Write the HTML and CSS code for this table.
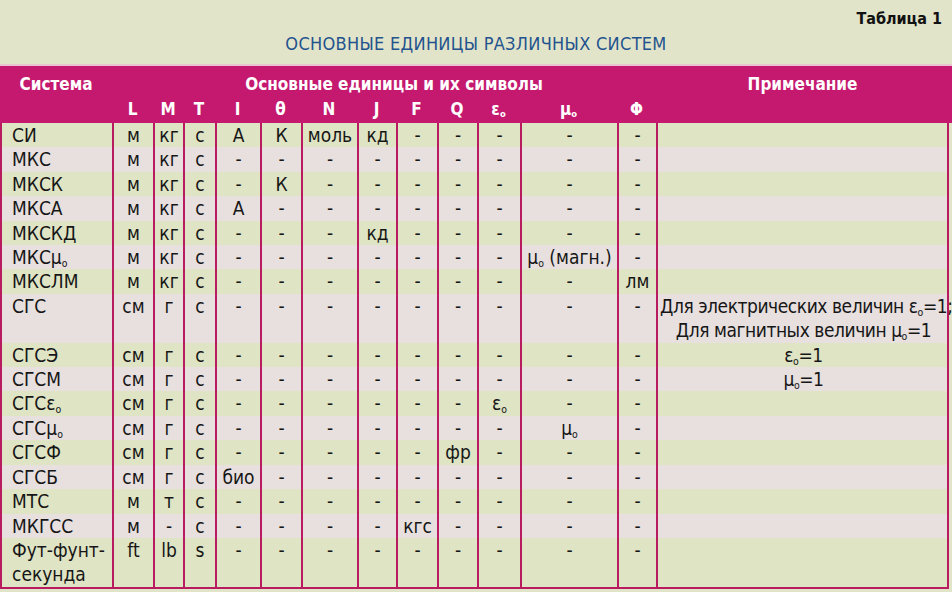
FILE: index.html
```html
<!DOCTYPE html>
<html lang="ru">
<head>
<meta charset="utf-8">
<title>Таблица 1</title>
<link rel="stylesheet" href="styles.css">
</head>
<body>
<div class="page">
  <div class="top">
    <div class="tabno">Таблица 1</div>
    <div class="title">ОСНОВНЫЕ ЕДИНИЦЫ РАЗЛИЧНЫХ СИСТЕМ</div>
  </div>
  <div class="table">
    <div class="head">
      <div class="hrow hrow1">
        <div class="h-sys">Система</div>
        <div class="h-units">Основные единицы и их символы</div>
        <div class="h-note">Примечание</div>
      </div>
      <div class="hrow hrow2">
        <div></div>
        <div>L</div><div>M</div><div>T</div><div>I</div><div>θ</div><div>N</div><div>J</div><div>F</div><div>Q</div>
        <div>ε<sub class="o">o</sub></div><div>μ<sub class="o">o</sub></div><div>Φ</div>
        <div></div>
      </div>
    </div>

    <div class="row g"><div class="name">СИ</div><div>м</div><div>кг</div><div>с</div><div>А</div><div>К</div><div>моль</div><div>кд</div><div>-</div><div>-</div><div>-</div><div>-</div><div>-</div><div class="note"></div></div>
    <div class="row p"><div class="name">МКС</div><div>м</div><div>кг</div><div>с</div><div>-</div><div>-</div><div>-</div><div>-</div><div>-</div><div>-</div><div>-</div><div>-</div><div>-</div><div class="note"></div></div>
    <div class="row g"><div class="name">МКСК</div><div>м</div><div>кг</div><div>с</div><div>-</div><div>К</div><div>-</div><div>-</div><div>-</div><div>-</div><div>-</div><div>-</div><div>-</div><div class="note"></div></div>
    <div class="row p"><div class="name">МКСА</div><div>м</div><div>кг</div><div>с</div><div>А</div><div>-</div><div>-</div><div>-</div><div>-</div><div>-</div><div>-</div><div>-</div><div>-</div><div class="note"></div></div>
    <div class="row g"><div class="name">МКСКД</div><div>м</div><div>кг</div><div>с</div><div>-</div><div>-</div><div>-</div><div>кд</div><div>-</div><div>-</div><div>-</div><div>-</div><div>-</div><div class="note"></div></div>
    <div class="row p"><div class="name">МКСμ<sub class="o">o</sub></div><div>м</div><div>кг</div><div>с</div><div>-</div><div>-</div><div>-</div><div>-</div><div>-</div><div>-</div><div>-</div><div>μ<sub class="o">o</sub> (магн.)</div><div>-</div><div class="note"></div></div>
    <div class="row g"><div class="name">МКСЛМ</div><div>м</div><div>кг</div><div>с</div><div>-</div><div>-</div><div>-</div><div>-</div><div>-</div><div>-</div><div>-</div><div>-</div><div>лм</div><div class="note"></div></div>
    <div class="row p"><div class="name">СГС</div><div>см</div><div>г</div><div>с</div><div>-</div><div>-</div><div>-</div><div>-</div><div>-</div><div>-</div><div>-</div><div>-</div><div>-</div><div class="note">Для электрических величин ε<sub class="o">o</sub>=1;<br>Для магнитных величин μ<sub class="o">o</sub>=1</div></div>
    <div class="row g"><div class="name">СГСЭ</div><div>см</div><div>г</div><div>с</div><div>-</div><div>-</div><div>-</div><div>-</div><div>-</div><div>-</div><div>-</div><div>-</div><div>-</div><div class="note">ε<sub class="o">o</sub>=1</div></div>
    <div class="row p"><div class="name">СГСМ</div><div>см</div><div>г</div><div>с</div><div>-</div><div>-</div><div>-</div><div>-</div><div>-</div><div>-</div><div>-</div><div>-</div><div>-</div><div class="note">μ<sub class="o">o</sub>=1</div></div>
    <div class="row g"><div class="name">СГСε<sub class="o">o</sub></div><div>см</div><div>г</div><div>с</div><div>-</div><div>-</div><div>-</div><div>-</div><div>-</div><div>-</div><div>ε<sub class="o">o</sub></div><div>-</div><div>-</div><div class="note"></div></div>
    <div class="row p"><div class="name">СГСμ<sub class="o">o</sub></div><div>см</div><div>г</div><div>с</div><div>-</div><div>-</div><div>-</div><div>-</div><div>-</div><div>-</div><div>-</div><div>μ<sub class="o">o</sub></div><div>-</div><div class="note"></div></div>
    <div class="row g"><div class="name">СГСФ</div><div>см</div><div>г</div><div>с</div><div>-</div><div>-</div><div>-</div><div>-</div><div>-</div><div>фр</div><div>-</div><div>-</div><div>-</div><div class="note"></div></div>
    <div class="row p"><div class="name">СГСБ</div><div>см</div><div>г</div><div>с</div><div>био</div><div>-</div><div>-</div><div>-</div><div>-</div><div>-</div><div>-</div><div>-</div><div>-</div><div class="note"></div></div>
    <div class="row g"><div class="name">МТС</div><div>м</div><div>т</div><div>с</div><div>-</div><div>-</div><div>-</div><div>-</div><div>-</div><div>-</div><div>-</div><div>-</div><div>-</div><div class="note"></div></div>
    <div class="row p"><div class="name">МКГСС</div><div>м</div><div>-</div><div>с</div><div>-</div><div>-</div><div>-</div><div>-</div><div>кгс</div><div>-</div><div>-</div><div>-</div><div>-</div><div class="note"></div></div>
    <div class="row g last"><div class="name">Фут-фунт-<br>секунда</div><div>ft</div><div>lb</div><div>s</div><div>-</div><div>-</div><div>-</div><div>-</div><div>-</div><div>-</div><div>-</div><div>-</div><div>-</div><div class="note"></div></div>
  </div>
</div>
</body>
</html>
```

FILE: styles.css
```css
* { box-sizing: border-box; }
html, body { margin: 0; padding: 0; }
body {
  background: #e2e4c9;
  font-family: "Liberation Sans Narrow", "DejaVu Sans Condensed", "Liberation Sans", sans-serif;
  color: #161616;
  width: 952px;
  height: 592px;
  overflow: hidden;
}
.page { width: 952px; }
.top {
  height: 66px;
  border-bottom: 2px solid #e9c6d2;
}
.tabno {
  text-align: right;
  padding: 9px 10px 0 0;
  font-weight: bold;
  font-size: 16px;
  line-height: 20px;
  color: #111;
}
.title {
  text-align: center;
  color: #23538e;
  font-size: 18px;
  letter-spacing: 0.3px;
  line-height: 20px;
  margin-top: 5px;
}
.hrow, .row {
  display: grid;
  grid-template-columns: 112px 41px 30px 32px 45px 41px 56px 39px 41px 40px 43px 97px 39px 293px;
  width: 949px;
}
.head {
  background: #c4196f;
  color: #fff;
  font-weight: bold;
  font-size: 17px;
  width: 952px;
}
.hrow1 { height: 30px; padding-top: 6px; line-height: 24px; }
.hrow2 { height: 27px; line-height: 26px; font-size: 17px; }
.h-sys { text-align: center; }
.h-units { grid-column: 2 / 14; text-align: center; padding-left: 20px; }
.h-note { text-align: center; }
.hrow2 > div { text-align: center; }
.row {
  font-size: 19px;
  line-height: 24.4px;
}
.row > div {
  border-left: 2px solid #b81b5f;
  text-align: center;
  white-space: nowrap;
}
.row > div.note {
  border-right: 2px solid #b81b5f;
  letter-spacing: -0.45px;
  padding-left: 2px;
}
.row > div.name { text-align: left; padding-left: 10px; }
.row.g { background: #dfe4c4; }
.row.p { background: #e7e0df; }
.row.last { border-bottom: 2px solid #b81b5f; }
sub.o {
  font-size: 0.55em;
  vertical-align: -0.25em;
  line-height: 0;
}
```
